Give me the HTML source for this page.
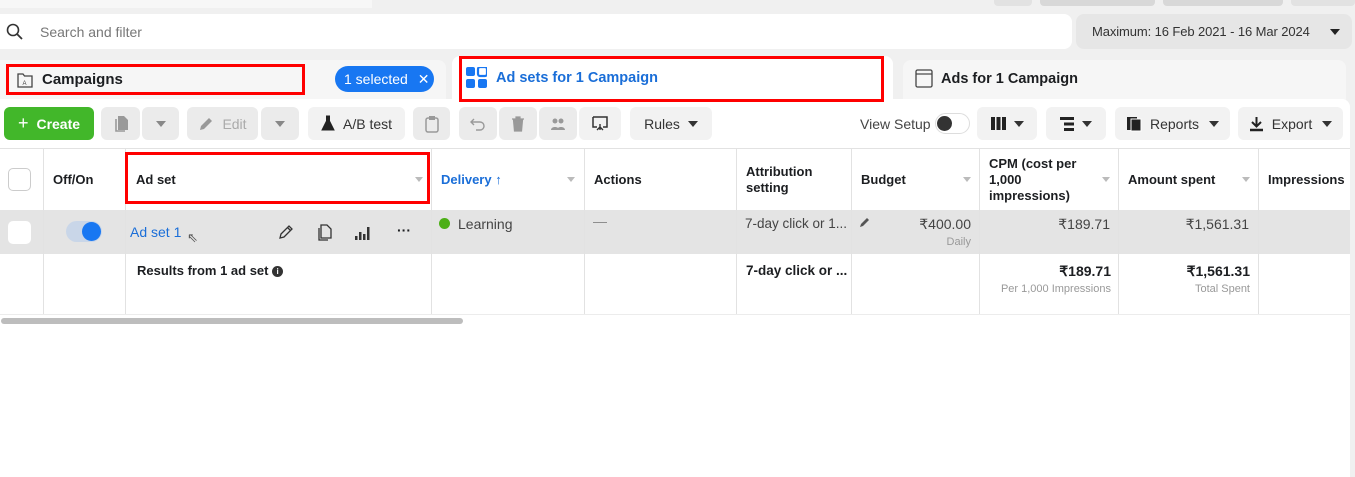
<!DOCTYPE html>
<html><head><meta charset="utf-8"><style>
*{box-sizing:border-box;margin:0;padding:0}
body{width:1355px;height:477px;background:#fff;font-family:"Liberation Sans",sans-serif;font-size:14px;color:#1c1e21;position:relative;overflow:hidden}
.a{position:absolute}
.btn{position:absolute;background:#ebebeb;border-radius:6px;top:107px;height:33px;display:flex;align-items:center;justify-content:center;color:#444;font-size:14px}
.dis{color:#aaa}
.red{position:absolute;border:3px solid #f00}
.vl{position:absolute;top:148px;height:166px;width:1px;background:#e2e2e2}
.th{position:absolute;font-weight:bold;font-size:13px;color:#1c1e21}
.car{display:inline-block;width:0;height:0;border-left:5px solid transparent;border-right:5px solid transparent;border-top:6px solid #333;margin-left:8px}
.sc{position:absolute;width:0;height:0;border-left:4px solid transparent;border-right:4px solid transparent;border-top:5px solid #bbb;top:177px}
.r{position:absolute;text-align:right}
</style></head><body>
<div class="a" style="left:0;top:0;width:1355px;height:148px;background:#f0f0f0"></div>
<div class="a" style="left:0;top:0;width:372px;height:8px;background:#f7f7f7"></div>
<div class="a" style="left:994px;top:0;width:38px;height:6px;background:#e2e2e2;border-radius:0 0 4px 4px"></div>
<div class="a" style="left:1040px;top:0;width:115px;height:6px;background:#d8d8d8;border-radius:0 0 4px 4px"></div>
<div class="a" style="left:1163px;top:0;width:120px;height:6px;background:#d8d8d8;border-radius:0 0 4px 4px"></div>
<div class="a" style="left:1291px;top:0;width:64px;height:6px;background:#e2e2e2;border-radius:0 0 4px 4px"></div>
<div class="a" style="left:0;top:14px;width:1072px;height:35px;background:#fff;border-radius:0 8px 8px 0"></div>
<svg class="a" style="left:6px;top:23px" width="18" height="18" viewBox="0 0 18 18"><circle cx="7" cy="7" r="5.5" fill="none" stroke="#333" stroke-width="1.6"/><path d="M11 11l5 5" stroke="#333" stroke-width="1.8"/></svg>
<div class="a" style="left:40px;top:24px;color:#777;font-size:14px">Search and filter</div>
<div class="a" style="left:1076px;top:14px;width:276px;height:35px;background:#e6e6e6;border-radius:8px"></div>
<div class="a" style="left:1092px;top:24px;color:#333;font-size:13px;letter-spacing:-0.1px">Maximum: 16 Feb 2021 - 16 Mar 2024</div>
<div class="a" style="left:1330px;top:29px;border-left:5px solid transparent;border-right:5px solid transparent;border-top:6px solid #222"></div>
<div class="a" style="left:0;top:60px;width:446px;height:45px;background:#f6f6f6;border-radius:0 8px 0 0"></div>
<div class="a" style="left:452px;top:56px;width:441px;height:50px;background:#fff;border-radius:8px 8px 0 0"></div>
<div class="a" style="left:903px;top:60px;width:443px;height:45px;background:#f6f6f6;border-radius:8px 8px 0 0"></div>
<svg class="a" style="left:16px;top:71px" width="18" height="18" viewBox="0 0 18 18"><path d="M2 3h5l1.5 2H16v11H2z" fill="none" stroke="#444" stroke-width="1.3"/><text x="6.5" y="14" font-size="6" font-family="Liberation Sans" fill="#444">A</text></svg>
<div class="a" style="left:42px;top:71px;font-weight:bold;font-size:15px">Campaigns</div>
<div class="a" style="left:335px;top:66px;width:99px;height:26px;background:#1877f2;border-radius:13px;color:#fff;font-size:14px;padding:5px 0 0 9px">1 selected <span style="margin-left:6px">✕</span></div>
<svg class="a" style="left:466px;top:67px" width="21" height="21" viewBox="0 0 21 21" fill="#1877f2"><rect x="0" y="0" width="9" height="9" rx="2"/><rect x="12" y="0" width="9" height="9" rx="2" fill="none" stroke="#1877f2" stroke-width="2.2"/><rect x="0" y="12" width="9" height="9" rx="2"/><rect x="12" y="12" width="9" height="9" rx="2"/></svg>
<div class="a" style="left:496px;top:70px;font-weight:bold;font-size:14.5px;color:#1a6ed8">Ad sets for 1 Campaign</div>
<svg class="a" style="left:915px;top:69px" width="18" height="19" viewBox="0 0 18 19"><rect x="1" y="1" width="16" height="17" rx="1.5" fill="none" stroke="#444" stroke-width="1.3"/><path d="M1 5h16" stroke="#444" stroke-width="1.2"/></svg>
<div class="a" style="left:941px;top:71px;font-weight:bold;font-size:14.5px">Ads for 1 Campaign</div>
<div class="a" style="left:0;top:99px;width:1350px;height:49px;background:#fff;border-radius:0 8px 0 0"></div>
<div class="btn" style="left:4px;width:90px;background:#42b72a;color:#fff;font-weight:bold;font-size:14px"><span style="font-size:18px;font-weight:normal;margin-right:8px">+</span>Create</div>
<div class="btn" style="left:101px;width:39px"><svg width="16" height="18" viewBox="0 0 16 18"><path d="M5 1h6l4 4v10H5z" fill="#999"/><path d="M3 4v12h9" fill="none" stroke="#999" stroke-width="1.6"/></svg></div>
<div class="btn" style="left:142px;width:37px"><span class="car" style="margin:0;border-top-color:#888"></span></div>
<div class="btn dis" style="left:187px;width:71px"><svg width="16" height="16" viewBox="0 0 16 16" style="margin-right:8px"><path d="M2 14l1-4 8-8 3 3-8 8z" fill="#999"/></svg>Edit</div>
<div class="btn" style="left:261px;width:38px"><span class="car" style="margin:0;border-top-color:#888"></span></div>
<div class="btn" style="left:308px;width:97px;background:#f2f2f2;color:#333"><svg width="14" height="17" viewBox="0 0 14 17" style="margin-right:8px"><path d="M5 1h4M5.5 1v5L1 15h12L8.5 6V1" fill="#222" stroke="#222"/></svg>A/B test</div>
<div class="btn" style="left:413px;width:37px"><svg width="14" height="18" viewBox="0 0 14 18"><rect x="1" y="3" width="12" height="14" rx="2" fill="none" stroke="#999" stroke-width="1.5"/><rect x="4" y="1" width="6" height="4" fill="#999"/></svg></div>
<div class="btn" style="left:459px;width:38px"><svg width="16" height="16" viewBox="0 0 16 16"><path d="M4 3L1 6l3 3M1 6h9a4 4 0 010 8H6" fill="none" stroke="#999" stroke-width="1.4"/></svg></div>
<div class="btn" style="left:499px;width:38px"><svg width="14" height="16" viewBox="0 0 14 16"><path d="M1 3h12M5 3V1h4v2M2.5 4l1 11h7l1-11z" fill="#999" stroke="#999" stroke-width="1.2"/></svg></div>
<div class="btn" style="left:539px;width:38px"><svg width="16" height="14" viewBox="0 0 16 14"><circle cx="5" cy="4" r="2.5" fill="#999"/><circle cx="11" cy="4" r="2.5" fill="#999"/><path d="M1 13c0-4 8-4 8 0M7 13c0-4 8-4 8 0" fill="#999"/></svg></div>
<div class="btn" style="left:579px;width:42px;background:#f2f2f2"><svg width="18" height="18" viewBox="0 0 18 18"><path d="M2 2h14v10h-4M6 12H2V2" fill="none" stroke="#333" stroke-width="1.5"/><path d="M6 15l3-3 3 3M9 9v6" fill="none" stroke="#333" stroke-width="1.4"/></svg></div>
<div class="btn" style="left:630px;width:82px;background:#f2f2f2;color:#333">Rules<span class="car"></span></div>
<div class="a" style="left:860px;top:116px;color:#444">View Setup</div>
<div class="a" style="left:935px;top:113px;width:35px;height:21px;border:1px solid #ddd;border-radius:11px;background:#fff"></div>
<div class="a" style="left:937px;top:116px;width:15px;height:15px;border-radius:50%;background:#333"></div>
<div class="btn" style="left:977px;width:60px;background:#f2f2f2"><svg width="15" height="13" viewBox="0 0 15 13"><rect x="0" y="0" width="4" height="13" fill="#222"/><rect x="5.5" y="0" width="4" height="13" fill="#222"/><rect x="11" y="0" width="4" height="13" fill="#222"/></svg><span class="car"></span></div>
<div class="btn" style="left:1046px;width:60px;background:#f2f2f2"><svg width="14" height="14" viewBox="0 0 14 14"><rect x="0" y="0" width="14" height="3" fill="#222"/><rect x="4" y="5.5" width="10" height="3" fill="#222"/><rect x="4" y="11" width="10" height="3" fill="#222"/></svg><span class="car"></span></div>
<div class="btn" style="left:1115px;width:115px;background:#f2f2f2;color:#333"><svg width="16" height="16" viewBox="0 0 16 16" style="margin-right:8px"><rect x="1" y="1" width="10" height="13" fill="#222"/><rect x="5" y="3" width="10" height="12" fill="#222" stroke="#fff"/></svg>Reports<span class="car" style="margin-left:10px"></span></div>
<div class="btn" style="left:1238px;width:105px;background:#f2f2f2;color:#333"><svg width="15" height="16" viewBox="0 0 15 16" style="margin-right:8px"><path d="M7.5 1v9M3 6l4.5 4.5L12 6" fill="none" stroke="#222" stroke-width="2"/><path d="M1 14h13" stroke="#222" stroke-width="2.5"/></svg>Export<span class="car" style="margin-left:10px"></span></div>
<div class="a" style="left:0;top:148px;width:1350px;height:1px;background:#e2e2e2"></div>
<div class="a" style="left:1350px;top:99px;width:5px;height:378px;background:#f0f0f0"></div>
<div class="a" style="left:0;top:210px;width:1350px;height:44px;background:#e4e4e4"></div>
<div class="a" style="left:0;top:314px;width:1350px;height:1px;background:#ececec"></div>
<div class="vl" style="left:43px"></div><div class="vl" style="left:125px"></div><div class="vl" style="left:431px"></div><div class="vl" style="left:584px"></div><div class="vl" style="left:736px"></div><div class="vl" style="left:851px"></div><div class="vl" style="left:979px"></div><div class="vl" style="left:1118px"></div><div class="vl" style="left:1258px"></div>
<div class="a" style="left:8px;top:168px;width:23px;height:23px;border:1px solid #ccc;border-radius:5px;background:#fff"></div>
<div class="th" style="left:53px;top:172px">Off/On</div>
<div class="th" style="left:136px;top:172px">Ad set</div><div class="sc" style="left:415px"></div>
<div class="th" style="left:441px;top:172px;color:#1a6ed8">Delivery ↑</div><div class="sc" style="left:567px"></div>
<div class="th" style="left:594px;top:172px">Actions</div>
<div class="th" style="left:746px;top:164px;line-height:16px">Attribution<br>setting</div>
<div class="th" style="left:861px;top:172px">Budget</div><div class="sc" style="left:963px"></div>
<div class="th" style="left:989px;top:156px;line-height:16px">CPM (cost per<br>1,000<br>impressions)</div><div class="sc" style="left:1102px"></div>
<div class="th" style="left:1128px;top:172px">Amount spent</div><div class="sc" style="left:1242px"></div>
<div class="th" style="left:1268px;top:172px">Impressions</div>
<div class="a" style="left:8px;top:221px;width:23px;height:23px;border-radius:5px;background:#fff"></div>
<div class="a" style="left:66px;top:221px;width:36px;height:21px;border-radius:11px;background:#c9d6e8"></div>
<div class="a" style="left:82px;top:222px;width:19px;height:19px;border-radius:50%;background:#1877f2"></div>
<div class="a" style="left:130px;top:224px;color:#1a6ed8">Ad set 1</div>
<div class="a" style="left:187px;top:230px;font-size:13px;color:#555">⇖</div>
<svg class="a" style="left:278px;top:224px" width="16" height="16" viewBox="0 0 16 16"><path d="M2 14l1-4 8-8 3 3-8 8z M9.5 3.5l3 3" fill="none" stroke="#333" stroke-width="1.3"/></svg>
<svg class="a" style="left:316px;top:224px" width="16" height="17" viewBox="0 0 16 17"><path d="M5 1h6l4 4v9H5z M3 4v12h9" fill="none" stroke="#333" stroke-width="1.3"/></svg>
<svg class="a" style="left:355px;top:225px" width="16" height="15" viewBox="0 0 16 15" fill="#333"><rect x="0" y="11" width="2.5" height="4"/><rect x="4" y="7" width="2.5" height="8"/><rect x="8" y="9" width="2.5" height="6"/><rect x="12" y="2" width="2.5" height="13"/></svg>
<div class="a" style="left:397px;top:222px;font-weight:bold">···</div>
<div class="a" style="left:439px;top:218px;width:11px;height:11px;border-radius:50%;background:#4caf16"></div>
<div class="a" style="left:458px;top:216px;color:#444">Learning</div>
<div class="a" style="left:593px;top:213px;color:#888">—</div>
<div class="a" style="left:745px;top:216px;color:#444;font-size:13.5px">7-day click or 1...</div>
<svg class="a" style="left:859px;top:216px" width="12" height="12" viewBox="0 0 12 12"><path d="M1 11l1-3 6-6 2 2-6 6z" fill="#555"/></svg>
<div class="r" style="right:384px;top:216px;color:#444">₹400.00</div>
<div class="r" style="right:384px;top:236px;color:#999;font-size:11px">Daily</div>
<div class="r" style="right:245px;top:216px;color:#444">₹189.71</div>
<div class="r" style="right:106px;top:216px;color:#444">₹1,561.31</div>
<div class="a" style="left:137px;top:263px;font-weight:bold;font-size:13px">Results from 1 ad set <span style="display:inline-block;width:11px;height:11px;border-radius:50%;background:#333;color:#fff;font-size:8px;text-align:center;line-height:11px;vertical-align:1px">i</span></div>
<div class="a" style="left:746px;top:263px;font-weight:bold;font-size:13.5px">7-day click or ...</div>
<div class="r" style="right:244px;top:263px;font-weight:bold">₹189.71</div>
<div class="r" style="right:244px;top:283px;color:#999;font-size:11px">Per 1,000 Impressions</div>
<div class="r" style="right:105px;top:263px;font-weight:bold">₹1,561.31</div>
<div class="r" style="right:105px;top:283px;color:#999;font-size:11px">Total Spent</div>
<div class="a" style="left:1px;top:318px;width:462px;height:6px;border-radius:3px;background:#bdbdbd"></div>
<div class="red" style="left:6px;top:64px;width:299px;height:31px"></div>
<div class="red" style="left:459px;top:56px;width:425px;height:46px"></div>
<div class="red" style="left:125px;top:152px;width:305px;height:52px"></div>
</body></html>
